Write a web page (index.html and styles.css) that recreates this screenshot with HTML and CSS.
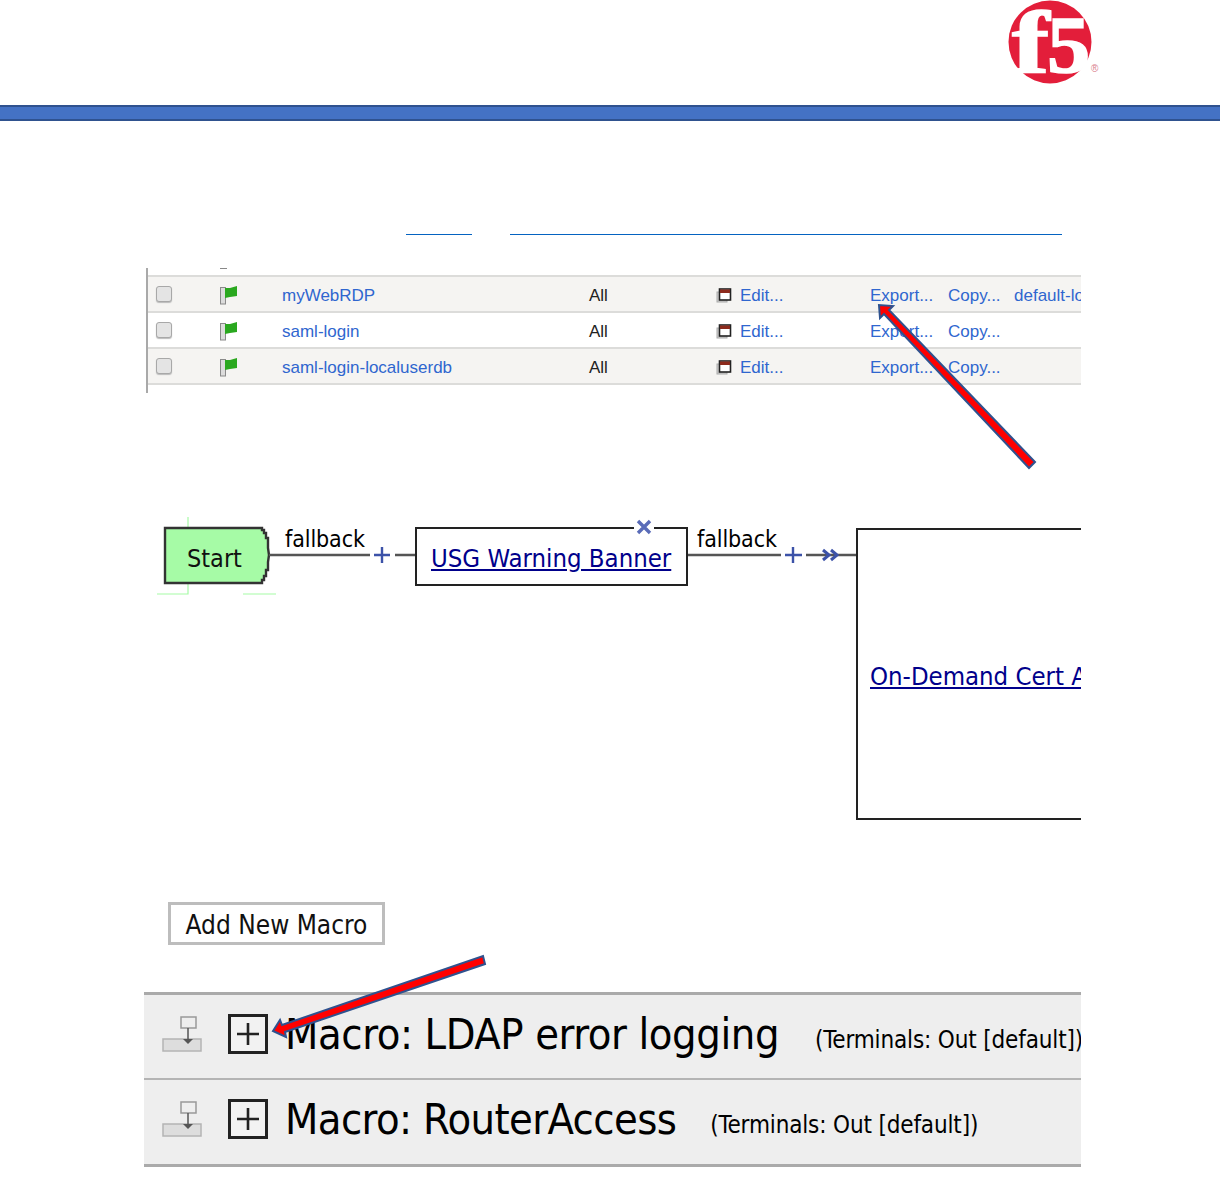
FILE: index.html
```html
<!DOCTYPE html>
<html lang="en">
<head>
<meta charset="utf-8">
<title>F5 macro guide page</title>
<link rel="stylesheet" href="styles.css">
</head>
<body>
<div class="page">
  <header class="top">
    <svg class="logo" width="92" height="105" viewBox="0 0 92 105">
      <circle cx="42" cy="42" r="41.5" fill="#e31e3a"/>
      <text class="logo-f" transform="translate(4 72) scale(1.4 1.12)">f</text>
      <text class="logo-5" transform="translate(39 72) scale(1.08 1)">5</text>
      <text class="logo-r" x="83" y="72">®</text>
    </svg>
  </header>
  <div class="bar"></div>
  <div class="links"><span class="link-a"></span><span class="link-b"></span></div>

  <section class="table">
    <div class="dash"></div>
    <div class="row alt">
      <span class="check"></span>
      <svg class="flag" width="18" height="20" viewBox="0 0 18 20"><rect x="0.5" y="2.5" width="5" height="16.5" fill="#dcdcdc" stroke="#8a8a8a"/><path d="M5 3 L10 3 L17 1 V11 L10 12 L5 13Z" fill="#2aa81f"/></svg>
      <a class="name">myWebRDP</a><span class="all">All</span>
      <svg class="win" width="16" height="16" viewBox="0 0 16 16"><rect x="1" y="5" width="10" height="10" fill="#ccc" stroke="#aaa"/><rect x="3.5" y="2" width="11" height="11" fill="#fff" stroke="#222" stroke-width="1.6"/><rect x="4" y="2.5" width="10" height="3.5" fill="#8c2a1c"/></svg>
      <a class="edit">Edit...</a><a class="export">Export...</a><a class="copy">Copy...</a><a class="def">default-log-setting</a>
    </div>
    <div class="row">
      <span class="check"></span>
      <svg class="flag" width="18" height="20" viewBox="0 0 18 20"><rect x="0.5" y="2.5" width="5" height="16.5" fill="#dcdcdc" stroke="#8a8a8a"/><path d="M5 3 L10 3 L17 1 V11 L10 12 L5 13Z" fill="#2aa81f"/></svg>
      <a class="name">saml-login</a><span class="all">All</span>
      <svg class="win" width="16" height="16" viewBox="0 0 16 16"><rect x="1" y="5" width="10" height="10" fill="#ccc" stroke="#aaa"/><rect x="3.5" y="2" width="11" height="11" fill="#fff" stroke="#222" stroke-width="1.6"/><rect x="4" y="2.5" width="10" height="3.5" fill="#8c2a1c"/></svg>
      <a class="edit">Edit...</a><a class="export">Export...</a><a class="copy">Copy...</a>
    </div>
    <div class="row alt">
      <span class="check"></span>
      <svg class="flag" width="18" height="20" viewBox="0 0 18 20"><rect x="0.5" y="2.5" width="5" height="16.5" fill="#dcdcdc" stroke="#8a8a8a"/><path d="M5 3 L10 3 L17 1 V11 L10 12 L5 13Z" fill="#2aa81f"/></svg>
      <a class="name">saml-login-localuserdb</a><span class="all">All</span>
      <svg class="win" width="16" height="16" viewBox="0 0 16 16"><rect x="1" y="5" width="10" height="10" fill="#ccc" stroke="#aaa"/><rect x="3.5" y="2" width="11" height="11" fill="#fff" stroke="#222" stroke-width="1.6"/><rect x="4" y="2.5" width="10" height="3.5" fill="#8c2a1c"/></svg>
      <a class="edit">Edit...</a><a class="export">Export...</a><a class="copy">Copy...</a>
    </div>
  </section>

  <section class="flow">
    <svg class="wires" width="936" height="320" viewBox="0 0 936 320">
      <path d="M43 3 V13 M43 70 V80 H12 M98 80 H131" stroke="#a6fba6" stroke-width="1.2" fill="none"/>
      <path d="M20 14 H117 L117 16 L119 16 L119 19 L121 19 L121 24 L123 24 L123 34 L124 41 L123 48 L123 56 L121 56 L121 62 L119 62 L119 66 L117 66 L117 69 H20Z" fill="#a6fba6" stroke="#333" stroke-width="2.4"/>
      <path d="M124 41 H225 M250 41 H271" stroke="#555" stroke-width="2.4"/>
      <path d="M229 41 H245 M237 33 V49 M640 41 H657 M648 33 V49" stroke="#3c52a8" stroke-width="2.4"/>
      <path d="M543 41 H636 M661 41 H712" stroke="#555" stroke-width="2.4"/>
      <path d="M678 36 L684 41 L678 46 M686 36 L692 41 L686 46" stroke="#3c52a8" stroke-width="3" fill="none"/>
    </svg>
    <span class="flow-start">Start</span>
    <span class="fall fall-1">fallback</span>
    <div class="node node-usg"><a class="node-link">USG Warning Banner</a></div>
    <svg class="x-mark" width="20" height="16" viewBox="0 0 20 16"><rect width="20" height="16" fill="#fff"/><path d="M4 2 L16 14 M16 2 L4 14" stroke="#5a6cb8" stroke-width="3.4"/></svg>
    <span class="fall fall-2">fallback</span>
    <div class="node node-cert"><a class="node-link">On-Demand Cert Auth</a></div>
  </section>

  <button class="add">Add New Macro</button>

  <section class="macros">
    <div class="macro first">
      <svg class="macro-icon" width="40" height="38" viewBox="0 0 40 38"><rect x="1" y="24" width="38" height="12" fill="#ddd" stroke="#b4b4b4" stroke-width="1.5"/><rect x="19" y="2" width="15" height="11" fill="#eee" stroke="#999" stroke-width="1.5"/><path d="M26 13 V28" stroke="#555" stroke-width="1.5"/><path d="M21 24 H31 L26 29Z" fill="#555"/></svg>
      <svg class="plus" width="40" height="40" viewBox="0 0 40 40"><rect x="1.5" y="1.5" width="37" height="37" fill="#f2f2f2" stroke="#222" stroke-width="3"/><path d="M9 20 H31 M20 9 V31" stroke="#222" stroke-width="2.6"/></svg>
      <span class="macro-title">Macro: LDAP error logging</span>
      <span class="macro-term term-1">(Terminals: Out [default])</span>
    </div>
    <div class="macro second">
      <svg class="macro-icon" width="40" height="38" viewBox="0 0 40 38"><rect x="1" y="24" width="38" height="12" fill="#ddd" stroke="#b4b4b4" stroke-width="1.5"/><rect x="19" y="2" width="15" height="11" fill="#eee" stroke="#999" stroke-width="1.5"/><path d="M26 13 V28" stroke="#555" stroke-width="1.5"/><path d="M21 24 H31 L26 29Z" fill="#555"/></svg>
      <svg class="plus" width="40" height="40" viewBox="0 0 40 40"><rect x="1.5" y="1.5" width="37" height="37" fill="#f2f2f2" stroke="#222" stroke-width="3"/><path d="M9 20 H31 M20 9 V31" stroke="#222" stroke-width="2.6"/></svg>
      <span class="macro-title title-2">Macro: RouterAccess</span>
      <span class="macro-term term-2">(Terminals: Out [default])</span>
    </div>
  </section>

  <svg class="arrows" width="1220" height="1180" viewBox="0 0 1220 1180">
    <path d="M1035 462 L1029 468 L884 314 L880 318 L879 305 L893 306 L889 310 Z" fill="#f00" stroke="#2f528f" stroke-width="2"/>
    <path d="M483 956 L485 964 L285 1032 L286 1037 L273 1031 L280 1020 L282 1025 Z" fill="#f00" stroke="#2f528f" stroke-width="2"/>
  </svg>
</div>
</body>
</html>
```

FILE: styles.css
```css
html, body { margin: 0; padding: 0; background: #fff; }
.page { position: relative; width: 1220px; height: 1180px; overflow: hidden; font-family: "Liberation Sans", Arial, sans-serif; }

.top { height: 105px; display: flex; justify-content: flex-end; align-items: flex-start; padding-right: 120px; box-sizing: border-box; }
.logo { display: block; }
.logo-f, .logo-5 { font-family: "Liberation Serif", serif; font-weight: bold; font-size: 80px; fill: #fff; stroke: #fff; stroke-width: 1.5px; }
.logo-r { font-family: "Liberation Sans", sans-serif; font-size: 10px; fill: #d9808c; }

.bar { height: 12px; background: #4472c4; border-top: 2px solid #2f528f; border-bottom: 2px solid #2f528f; }

.links { display: flex; height: 1px; margin-top: 113px; padding-left: 406px; gap: 38px; }
.link-a, .link-b { display: block; height: 1px; background: #0563c1; }
.link-a { width: 66px; }
.link-b { width: 552px; }

.table { margin: 33px 0 0 146px; width: 935px; height: 125px; box-sizing: border-box; border-left: 2px solid #a9a9a9; overflow: hidden; padding-top: 7px; position: relative; font-size: 17px; }
.dash { position: absolute; left: 72px; top: 0; width: 7px; height: 1px; background: #888; }
.row { height: 34px; display: grid; grid-template-columns: 8px 16px 48px 18px 44px 307px 127px 24px 130px 78px 66px 200px; align-items: center; border-top: 2px solid #dcdcda; background: #fff; white-space: nowrap; line-height: 37px; }
.row:nth-child(4) { border-bottom: 2px solid #dcdcda; }
.row.alt { background: #f5f4f2; }
.check { grid-column: 2; width: 14px; height: 14px; border: 1px solid #a8a8a8; border-radius: 3px; background: #e4e4e4; box-shadow: 0 1px 1px #bbb; margin-top: -3px; }
.flag { grid-column: 4; margin-top: -2px; }
.win { grid-column: 8; margin-top: -1px; }
.name { grid-column: 6; color: #2f66cf; }
.all { grid-column: 7; color: #222; }
.edit { grid-column: 9; color: #2f66cf; }
.export { grid-column: 10; color: #2f66cf; }
.copy { grid-column: 11; color: #2f66cf; }
.def { grid-column: 12; color: #2f66cf; }

.flow { position: relative; margin: 121px 0 0 145px; width: 936px; height: 311px; overflow: hidden; font-family: "DejaVu Sans", Tahoma, sans-serif; font-stretch: condensed; }
.wires { position: absolute; left: 0; top: 0; }
.flow-start { position: absolute; left: 42px; top: 27px; font-size: 25px; line-height: 36px; color: #111; }
.fall { position: absolute; top: 7px; font-size: 23px; letter-spacing: -0.1px; line-height: 36px; color: #000; }
.fall-1 { left: 140px; }
.fall-2 { left: 552px; }
.node { position: absolute; box-sizing: border-box; background: #fff; border: 2px solid #222; display: flex; align-items: center; }
.node-usg { left: 270px; top: 13px; width: 273px; height: 59px; padding: 2px 0 0 14px; }
.node-cert { left: 711px; top: 14px; width: 320px; height: 292px; padding: 4px 0 0 12px; }
.node-link { color: #00008b; text-decoration: underline; font-size: 25.5px; white-space: nowrap; }
.x-mark { position: absolute; left: 489px; top: 5px; }

.add { display: block; margin: 77px 0 0 168px; width: 217px; height: 43px; padding: 2px 0 0; background: #fff; border: 3px solid #bdbdbd; font-family: "DejaVu Sans", Tahoma, sans-serif; font-stretch: condensed; font-size: 26px; color: #111; }

.macros { margin: 47px 0 0 144px; width: 937px; height: 175px; box-sizing: border-box; background: #eee; border-top: 3px solid #aaa; border-bottom: 3px solid #aaa; overflow: hidden; font-family: "DejaVu Sans", Tahoma, sans-serif; font-stretch: condensed; }
.macro { display: flex; align-items: center; padding: 0 0 6px 18px; box-sizing: border-box; white-space: nowrap; color: #000; }
.macro.first { height: 85px; border-bottom: 2px solid #b4b4b4; }
.macro.second { height: 84px; padding-bottom: 7px; }
.macro-icon { margin-right: 26px; flex: none; }
.plus { margin-right: 17px; flex: none; }
.macro-title { font-size: 43px; letter-spacing: -0.4px; }
.title-2 { letter-spacing: -0.6px; }
.macro-term { font-size: 24px; letter-spacing: -0.15px; margin-top: 12px; }
.term-1 { margin-left: 36px; }
.term-2 { margin-left: 34px; }

.arrows { position: absolute; left: 0; top: 0; pointer-events: none; }
```
